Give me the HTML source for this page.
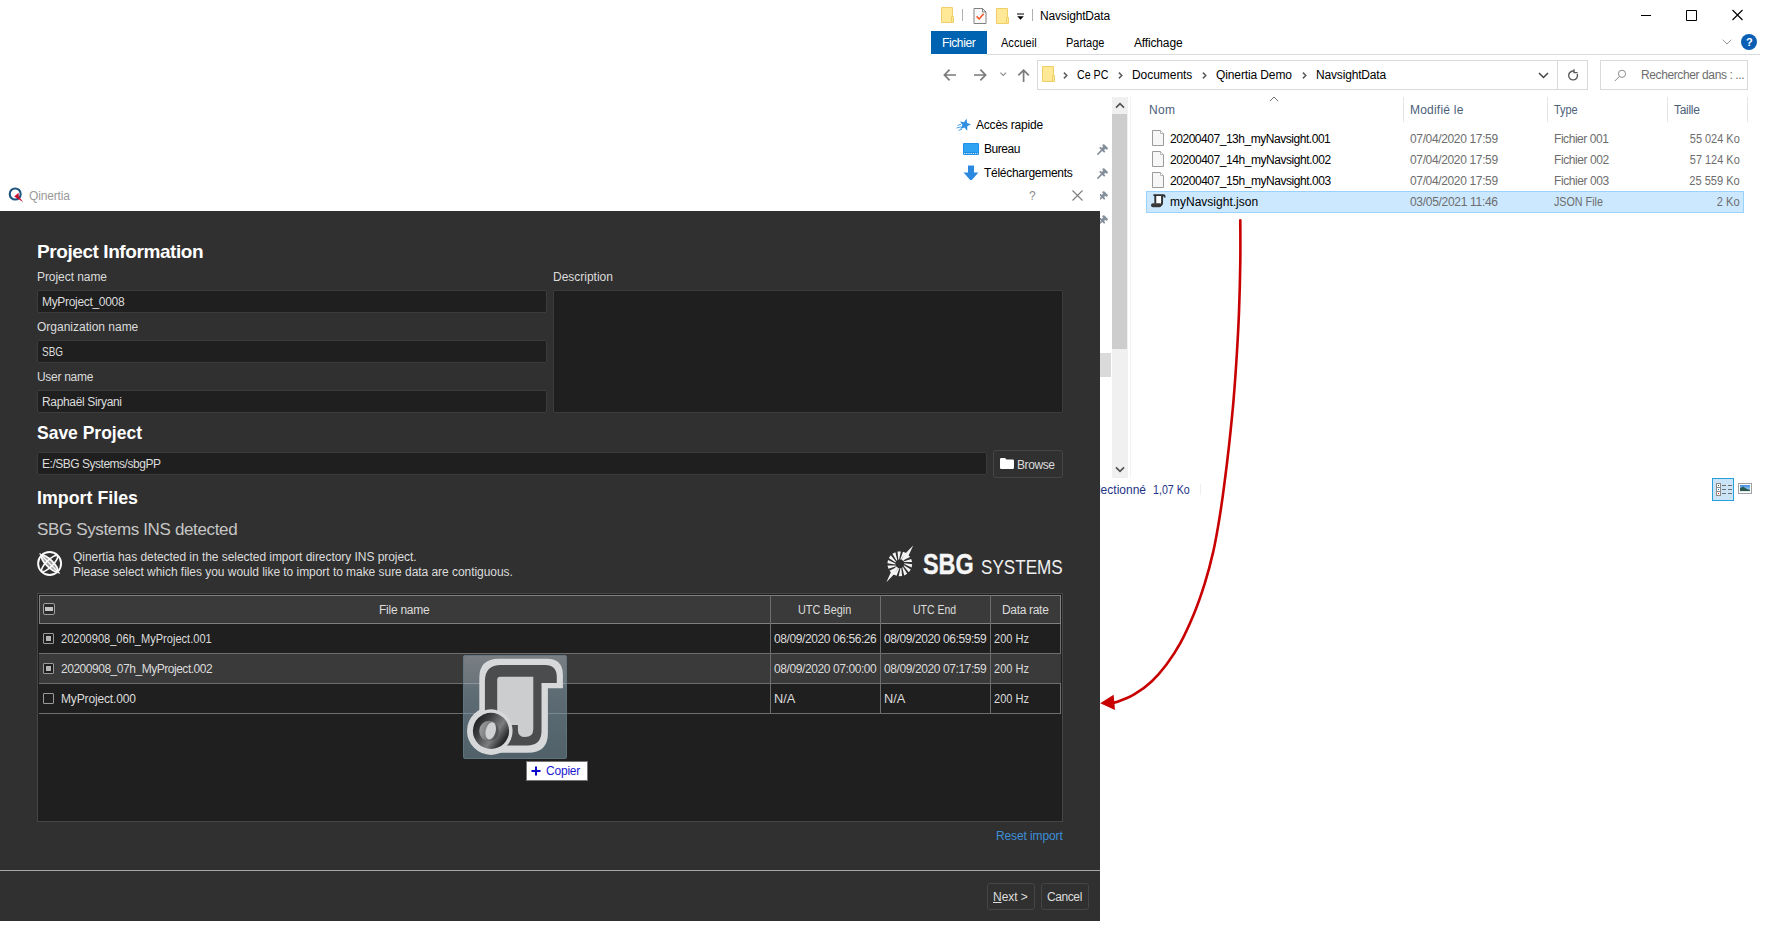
<!DOCTYPE html>
<html lang="fr">
<head>
<meta charset="utf-8">
<title>Qinertia - Import</title>
<style>
html,body{margin:0;padding:0;}
body{width:1781px;height:941px;position:relative;overflow:hidden;background:#fff;
  font-family:"Liberation Sans",sans-serif;font-size:12px;color:#000;}
.a{position:absolute;white-space:nowrap;}
.t{position:absolute;white-space:nowrap;line-height:16px;height:16px;transform-origin:0 50%;}
/* ---------- Explorer ---------- */
#ex .t{color:#000;font-size:12px;}
#ex .g{color:#6d6d6d;}
#ex .h{color:#4c607a;}
/* ---------- Dialog ---------- */
#dlg{position:absolute;left:0;top:211px;width:1100px;height:710px;background:#303030;}
#dlg .t{color:#dcdcdc;font-size:12px;}
#dlg .hd{font-weight:bold;font-size:19px;color:#fff;line-height:24px;height:24px;}
.inp{position:absolute;background:#1f1f1f;border:1px solid #3c3c3c;border-radius:2px;box-sizing:border-box;}
.btn{position:absolute;background:#303030;border:1px solid #454545;border-radius:3px;box-sizing:border-box;}
.cb{position:absolute;width:9px;height:9px;border:1px solid #9a9a9a;border-radius:1px;background:#1f1f1f;}
.cb.on::after{content:"";position:absolute;left:2px;top:2px;width:5px;height:5px;background:#b4b4b4;}
</style>
</head>
<body>

<!-- ================= EXPLORER WINDOW ================= -->
<div id="ex" class="a" style="left:0;top:0;width:1781px;height:941px;">
  <!-- title bar -->
  <svg class="a" style="left:941px;top:7px" width="13" height="16" viewBox="0 0 13 16"><path d="M0.5 0.5 H11.5 V15.5 H0.5 Z" fill="#ffe896" stroke="#f1cf68"/><path d="M10.5 9.5 H12.5 V15.5 H10.5 Z" fill="#ffe896" stroke="#f1cf68"/></svg>
  <div class="a" style="left:962px;top:9px;width:1px;height:12px;background:#b0b0b0;"></div>
  <svg class="a" style="left:973px;top:8px" width="14" height="16" viewBox="0 0 14 16"><path d="M1 0.5 H9.5 L13 4 V15.5 H1 Z" fill="#fafafa" stroke="#808080"/><path d="M9.5 0.5 V4 H13" fill="none" stroke="#808080"/><path d="M3.6 8.4 L6.2 11 L10.6 5.8" fill="none" stroke="#f0521e" stroke-width="1.5"/></svg>
  <svg class="a" style="left:996px;top:8px" width="13" height="16" viewBox="0 0 13 16"><path d="M0.5 0.5 H11.5 V15.5 H0.5 Z" fill="#ffe896" stroke="#f1cf68"/><path d="M10.5 9.5 H12.5 V15.5 H10.5 Z" fill="#ffe896" stroke="#f1cf68"/></svg>
  <svg class="a" style="left:1016px;top:13px" width="9" height="8" viewBox="0 0 9 8"><path d="M1 1 H8" stroke="#000" stroke-width="1"/><path d="M1.2 3.2 H7.8 L4.5 6.8 Z" fill="#000"/></svg>
  <div class="a" style="left:1032px;top:9px;width:1px;height:12px;background:#b0b0b0;"></div>
  <div class="t" style="left:1040px;top:8px;letter-spacing:-0.168px;">NavsightData</div>
  <svg class="a" style="left:1640px;top:9px" width="104" height="12" viewBox="0 0 104 12"><path d="M1 6.5 H11" stroke="#000" stroke-width="1"/><path d="M46.5 1.5 H56.5 V11.5 H46.5 Z" fill="none" stroke="#000" stroke-width="1"/><path d="M92.5 1 L102.5 11 M102.5 1 L92.5 11" stroke="#000" stroke-width="1.1" fill="none"/></svg>
  <!-- ribbon tabs -->
  <div class="a" style="left:931px;top:31px;width:56px;height:23px;background:#0063b1;"></div>
  <div class="a" style="left:987px;top:54px;width:773px;height:1px;background:#dadbdc;"></div>
  <div class="t" style="left:942px;top:35px;color:#fff;letter-spacing:-0.386px;">Fichier</div>
  <div class="t" style="left:1001px;top:35px;transform:scaleX(0.9202);">Accueil</div>
  <div class="t" style="left:1066px;top:35px;transform:scaleX(0.9136);">Partage</div>
  <div class="t" style="left:1134px;top:35px;letter-spacing:-0.154px;">Affichage</div>
  <svg class="a" style="left:1722px;top:39px" width="10" height="6" viewBox="0 0 10 6"><path d="M0.7 0.7 L5 5 L9.3 0.7" fill="none" stroke="#9a9a9a" stroke-width="1"/></svg>
  <div class="a" style="left:1741px;top:34px;width:16px;height:16px;border-radius:8px;background:#0a5fb4;"></div>
  <div class="t" style="left:1746px;top:34px;color:#fff;font-weight:bold;font-size:11px;">?</div>
  <!-- navigation bar -->
  <svg class="a" style="left:943px;top:68px" width="90" height="15" viewBox="0 0 90 15"><g fill="none" stroke="#7a7a7a" stroke-width="1.7"><path d="M13 7 H1.6 M6.6 1.6 L1.4 7 L6.6 12.4"/><path d="M31 7 H42.4 M37.4 1.6 L42.6 7 L37.4 12.4"/><path d="M75.4 7.4 L80.6 2.2 L85.8 7.4 M80.6 2.6 V14" /></g><path d="M57.4 4.6 L60.2 7.4 L63 4.6" fill="none" stroke="#8a8a8a" stroke-width="1.1"/></svg>
  <div class="a" style="left:1037px;top:60px;width:551px;height:30px;box-sizing:border-box;border:1px solid #d9d9d9;background:#fff;"></div>
  <svg class="a" style="left:1042px;top:66px" width="13" height="16" viewBox="0 0 13 16"><path d="M0.5 0.5 H11.5 V15.5 H0.5 Z" fill="#ffe896" stroke="#f1cf68"/><path d="M10.5 9.5 H12.5 V15.5 H10.5 Z" fill="#ffe896" stroke="#f1cf68"/></svg>
  <svg class="a" style="left:1063px;top:72px" width="5" height="7" viewBox="0 0 5 7"><path d="M0.9 0.6 L3.8 3.5 L0.9 6.4" fill="none" stroke="#5c5c5c" stroke-width="1.5"/></svg>
  <svg class="a" style="left:1118px;top:72px" width="5" height="7" viewBox="0 0 5 7"><path d="M0.9 0.6 L3.8 3.5 L0.9 6.4" fill="none" stroke="#5c5c5c" stroke-width="1.5"/></svg>
  <svg class="a" style="left:1202px;top:72px" width="5" height="7" viewBox="0 0 5 7"><path d="M0.9 0.6 L3.8 3.5 L0.9 6.4" fill="none" stroke="#5c5c5c" stroke-width="1.5"/></svg>
  <svg class="a" style="left:1302px;top:72px" width="5" height="7" viewBox="0 0 5 7"><path d="M0.9 0.6 L3.8 3.5 L0.9 6.4" fill="none" stroke="#5c5c5c" stroke-width="1.5"/></svg>
  <div class="t" style="left:1077px;top:67px;transform:scaleX(0.8884);">Ce PC</div>
  <div class="t" style="left:1132px;top:67px;letter-spacing:-0.050px;">Documents</div>
  <div class="t" style="left:1216px;top:67px;letter-spacing:-0.115px;">Qinertia Demo</div>
  <div class="t" style="left:1316px;top:67px;letter-spacing:-0.168px;">NavsightData</div>
  <svg class="a" style="left:1538px;top:72px" width="11" height="7" viewBox="0 0 11 7"><path d="M1 1 L5.5 5.5 L10 1" fill="none" stroke="#444" stroke-width="1.5"/></svg>
  <div class="a" style="left:1557px;top:61px;width:1px;height:28px;background:#d9d9d9;"></div>
  <svg class="a" style="left:1567px;top:69px" width="12" height="12" viewBox="0 0 12 12"><path d="M10.2 5 A4.4 4.4 0 1 1 7.4 2.3" fill="none" stroke="#5a5a5a" stroke-width="1.4"/><path d="M7 0.2 V3.6 H10.6" fill="none" stroke="#5a5a5a" stroke-width="1.3"/></svg>
  <div class="a" style="left:1600px;top:60px;width:148px;height:30px;box-sizing:border-box;border:1px solid #d9d9d9;background:#fff;"></div>
  <svg class="a" style="left:1614px;top:69px" width="13" height="13" viewBox="0 0 13 13"><circle cx="8" cy="4.8" r="3.6" fill="none" stroke="#8a8a8a" stroke-width="1"/><path d="M5.4 7.4 L0.8 12" stroke="#8a8a8a" stroke-width="1"/></svg>
  <div class="t g" style="left:1641px;top:67px;letter-spacing:-0.390px;">Rechercher dans : ...</div>
  <!-- navigation pane -->
  <svg class="a" style="left:956px;top:118px" width="15" height="14" viewBox="0 0 15 14"><g transform="rotate(14 9 7)"><path d="M9 0.6 L10.6 4.6 L14.6 4.9 L11.5 7.6 L12.6 12 L9 9.6 L5.4 12 L6.5 7.6 L3.4 4.9 L7.4 4.6 Z" fill="#2f8fe0"/></g><path d="M1.6 7.4 L5 6.4 M0.6 10 L5 8.8 M2.6 12.4 L6 11.2" stroke="#4aa0e6" stroke-width="1"/></svg>
  <div class="t" style="left:976px;top:117px;letter-spacing:-0.207px;">Accès rapide</div>
  <svg class="a" style="left:963px;top:143px" width="16" height="12" viewBox="0 0 16 12"><rect x="0" y="0" width="16" height="12" rx="1" fill="#1e90e6"/><rect x="1" y="1" width="14" height="8" fill="#2ea3f2"/><path d="M1 10.5 H15" stroke="#d6ecfb" stroke-width="1" stroke-dasharray="1.2 1"/></svg>
  <div class="t" style="left:984px;top:141px;letter-spacing:-0.461px;">Bureau</div>
  <svg class="a" style="left:963px;top:165px" width="16" height="17" viewBox="0 0 16 17"><path d="M5 0.5 H11 V7.5 H15.4 L8 16 L0.6 7.5 H5 Z" fill="#2b8ae0"/></svg>
  <div class="t" style="left:984px;top:165px;letter-spacing:-0.280px;">Téléchargements</div>
  <svg class="a" style="left:1097px;top:144px" width="11" height="11" viewBox="0 0 11 11"><g fill="none" stroke="#848f9a" stroke-linecap="round"><path d="M6.6 1.4 L9.6 4.4" stroke-width="2.4"/><path d="M7.4 3.6 L5.6 5.4" stroke-width="3"/><path d="M3.4 3.8 L7.2 7.6" stroke-width="1.9"/><path d="M4.6 6.4 L0.9 10.1" stroke-width="1.5"/></g></svg>
  <svg class="a" style="left:1097px;top:168px" width="11" height="11" viewBox="0 0 11 11"><g fill="none" stroke="#848f9a" stroke-linecap="round"><path d="M6.6 1.4 L9.6 4.4" stroke-width="2.4"/><path d="M7.4 3.6 L5.6 5.4" stroke-width="3"/><path d="M3.4 3.8 L7.2 7.6" stroke-width="1.9"/><path d="M4.6 6.4 L0.9 10.1" stroke-width="1.5"/></g></svg>
  <svg class="a" style="left:1097px;top:191px" width="11" height="11" viewBox="0 0 11 11"><g fill="none" stroke="#848f9a" stroke-linecap="round"><path d="M6.6 1.4 L9.6 4.4" stroke-width="2.4"/><path d="M7.4 3.6 L5.6 5.4" stroke-width="3"/><path d="M3.4 3.8 L7.2 7.6" stroke-width="1.9"/><path d="M4.6 6.4 L0.9 10.1" stroke-width="1.5"/></g></svg>
  <svg class="a" style="left:1097px;top:215px" width="11" height="11" viewBox="0 0 11 11"><g fill="none" stroke="#848f9a" stroke-linecap="round"><path d="M6.6 1.4 L9.6 4.4" stroke-width="2.4"/><path d="M7.4 3.6 L5.6 5.4" stroke-width="3"/><path d="M3.4 3.8 L7.2 7.6" stroke-width="1.9"/><path d="M4.6 6.4 L0.9 10.1" stroke-width="1.5"/></g></svg>
  <div class="a" style="left:1112px;top:97px;width:16px;height:381px;background:#f0f0f0;"></div>
  <div class="a" style="left:1112px;top:114px;width:15px;height:235px;background:#cdcdcd;"></div>
  <svg class="a" style="left:1115px;top:102px" width="10" height="7" viewBox="0 0 10 7"><path d="M1 5.6 L5 1.6 L9 5.6" fill="none" stroke="#505050" stroke-width="1.6"/></svg>
  <svg class="a" style="left:1115px;top:466px" width="10" height="7" viewBox="0 0 10 7"><path d="M1 1.4 L5 5.4 L9 1.4" fill="none" stroke="#505050" stroke-width="1.6"/></svg>
  <div class="a" style="left:1096px;top:353px;width:15px;height:24px;background:#dadada;"></div>
  <!-- file list -->
  <div class="a" style="left:1403px;top:97px;width:1px;height:25px;background:#e5e5e5;"></div>
  <div class="a" style="left:1547px;top:97px;width:1px;height:25px;background:#e5e5e5;"></div>
  <div class="a" style="left:1667px;top:97px;width:1px;height:25px;background:#e5e5e5;"></div>
  <div class="a" style="left:1747px;top:97px;width:1px;height:25px;background:#e5e5e5;"></div>
  <svg class="a" style="left:1269px;top:96px" width="10" height="6" viewBox="0 0 10 6"><path d="M0.8 5.2 L5 1 L9.2 5.2" fill="none" stroke="#707070" stroke-width="1"/></svg>
  <div class="t h" style="left:1149px;top:102px;letter-spacing:0.328px;">Nom</div>
  <div class="t h" style="left:1410px;top:102px;letter-spacing:0.216px;">Modifié le</div>
  <div class="t h" style="left:1554px;top:102px;transform:scaleX(0.9110);">Type</div>
  <div class="t h" style="left:1674px;top:102px;letter-spacing:-0.292px;">Taille</div>
  <div class="a" style="left:1146px;top:191px;width:598px;height:22px;box-sizing:border-box;border:1px solid #99d1ff;background:#cce8ff;"></div>
  <svg class="a" style="left:1152px;top:130px" width="12" height="16" viewBox="0 0 12 16"><path d="M0.5 0.5 H8.5 L11.5 3.5 V15.5 H0.5 Z" fill="#f7f7f7" stroke="#9b9b9b"/><path d="M8.5 0.5 V3.5 H11.5" fill="#fff" stroke="#b5b5b5"/></svg>
  <div class="t" style="left:1170px;top:131px;letter-spacing:-0.462px;">20200407_13h_myNavsight.001</div>
  <div class="t g" style="left:1410px;top:131px;letter-spacing:-0.355px;">07/04/2020 17:59</div>
  <div class="t g" style="left:1554px;top:131px;letter-spacing:-0.448px;">Fichier 001</div>
  <div class="t g" style="right:41px;top:131px;transform-origin:100% 50%;transform:scaleX(0.9119);">55 024 Ko</div>
  <svg class="a" style="left:1152px;top:151px" width="12" height="16" viewBox="0 0 12 16"><path d="M0.5 0.5 H8.5 L11.5 3.5 V15.5 H0.5 Z" fill="#f7f7f7" stroke="#9b9b9b"/><path d="M8.5 0.5 V3.5 H11.5" fill="#fff" stroke="#b5b5b5"/></svg>
  <div class="t" style="left:1170px;top:152px;letter-spacing:-0.447px;">20200407_14h_myNavsight.002</div>
  <div class="t g" style="left:1410px;top:152px;letter-spacing:-0.355px;">07/04/2020 17:59</div>
  <div class="t g" style="left:1554px;top:152px;letter-spacing:-0.408px;">Fichier 002</div>
  <div class="t g" style="right:41px;top:152px;transform-origin:100% 50%;transform:scaleX(0.9119);">57 124 Ko</div>
  <svg class="a" style="left:1152px;top:172px" width="12" height="16" viewBox="0 0 12 16"><path d="M0.5 0.5 H8.5 L11.5 3.5 V15.5 H0.5 Z" fill="#f7f7f7" stroke="#9b9b9b"/><path d="M8.5 0.5 V3.5 H11.5" fill="#fff" stroke="#b5b5b5"/></svg>
  <div class="t" style="left:1170px;top:173px;letter-spacing:-0.447px;">20200407_15h_myNavsight.003</div>
  <div class="t g" style="left:1410px;top:173px;letter-spacing:-0.355px;">07/04/2020 17:59</div>
  <div class="t g" style="left:1554px;top:173px;letter-spacing:-0.408px;">Fichier 003</div>
  <div class="t g" style="right:41px;top:173px;transform-origin:100% 50%;transform:scaleX(0.9211);">25 559 Ko</div>
  <svg class="a" style="left:1150px;top:193px" width="16" height="15" viewBox="0 0 16 15"><rect x="6" y="2.6" width="5.4" height="8" fill="#fff"/><g fill="none" stroke="#2e2e2e" stroke-width="1.9"><path d="M3.4 2.1 H13.4 Q14.6 2.1 14.6 3.4 V4.6"/><path d="M5.3 2.4 V10.4"/><path d="M12.1 2.4 V9.6 Q12.1 12.6 9 12.6"/></g><rect x="1" y="10.2" width="10.4" height="4" rx="2" fill="#383838"/></svg>
  <div class="t" style="left:1170px;top:194px;letter-spacing:0.005px;">myNavsight.json</div>
  <div class="t g" style="left:1410px;top:194px;letter-spacing:-0.302px;">03/05/2021 11:46</div>
  <div class="t g" style="left:1554px;top:194px;transform:scaleX(0.8942);">JSON File</div>
  <div class="t g" style="right:41px;top:194px;transform-origin:100% 50%;transform:scaleX(0.9276);">2 Ko</div>
  <!-- status bar -->
  <div class="t" style="right:635px;top:482px;color:#1e3287;transform-origin:100% 50%;letter-spacing:0.000px;">1 élément sélectionné</div>
  <div class="t" style="left:1153px;top:482px;color:#1e3287;transform:scaleX(0.8870);">1,07 Ko</div>
  <div class="a" style="left:1200px;top:484px;width:1px;height:11px;background:#efefef;"></div>
  <div class="a" style="left:1130px;top:97px;width:1px;height:381px;background:#f3f3f3;"></div>
  <div class="a" style="left:1712px;top:478px;width:22px;height:23px;box-sizing:border-box;border:1px solid #26a0da;background:#cce4f7;"></div>
  <svg class="a" style="left:1716px;top:483px" width="17" height="13" viewBox="0 0 17 13"><rect x="0.5" y="0.5" width="4" height="12" fill="#fff" stroke="#8a8a8a"/><path d="M0.5 4.5 H4.5 M0.5 8.5 H4.5" stroke="#8a8a8a"/><rect x="2" y="2" width="1" height="1" fill="#2a7a4a"/><rect x="2" y="6" width="1" height="1" fill="#3a7af0"/><rect x="2" y="10" width="1" height="1" fill="#e01010"/><path d="M6 2.5 H10 M12 2.5 H16 M6 6.5 H10 M12 6.5 H16 M6 10.5 H10 M12 10.5 H16" stroke="#6e6e6e"/></svg>
  <svg class="a" style="left:1738px;top:483px" width="14" height="11" viewBox="0 0 14 11"><defs><linearGradient id="sky" x1="0" y1="0" x2="0" y2="1"><stop offset="0" stop-color="#3a8ee8"/><stop offset="0.6" stop-color="#9cc6f0"/><stop offset="1" stop-color="#eef3f7"/></linearGradient></defs><rect x="0.5" y="0.5" width="13" height="10" fill="#fff" stroke="#a0a0a0"/><rect x="2" y="2" width="10" height="7" fill="url(#sky)"/><path d="M2 5.2 L5 3.6 L8 5.6 L12 7 V8 H2 Z" fill="#2a5a4a"/></svg>
</div>

<!-- ================= QINERTIA DIALOG ================= -->
<div id="dlgtitle" class="a" style="left:0;top:180px;width:1100px;height:31px;background:#fff;">
  <svg class="a" style="left:8px;top:7px" width="16" height="16" viewBox="0 0 16 16">
    <circle cx="7.2" cy="7" r="5.5" fill="none" stroke="#1d5480" stroke-width="2.1"/>
    <path d="M6.2 9.6 L10.6 5.8 L10.8 9.4 L15.2 15 L9.4 11.6 Z" fill="#c8102e"/>
  </svg>
  <div class="t" style="left:29px;top:8px;color:#9a9a9a;font-size:12px;letter-spacing:-0.147px;">Qinertia</div>
  <div class="t" style="left:1029px;top:8px;color:#8a8a8a;font-size:12px;">?</div>
  <svg class="a" style="left:1072px;top:10px" width="11" height="11" viewBox="0 0 11 11"><path d="M0.5 0.5 L10.5 10.5 M10.5 0.5 L0.5 10.5" stroke="#7c7c7c" stroke-width="1.1" fill="none"/></svg>
</div>
<div id="dlg">
  <div class="t hd" style="left:37px;top:29px;letter-spacing:-0.422px;">Project Information</div>
  <div class="t" style="left:37px;top:58px;letter-spacing:-0.064px;">Project name</div>
  <div class="inp" style="left:37px;top:79px;width:510px;height:23px;"></div>
  <div class="t" style="left:42px;top:83px;letter-spacing:-0.317px;">MyProject_0008</div>
  <div class="t" style="left:37px;top:108px;letter-spacing:-0.006px;">Organization name</div>
  <div class="inp" style="left:37px;top:129px;width:510px;height:23px;"></div>
  <div class="t" style="left:42px;top:133px;transform:scaleX(0.8286);">SBG</div>
  <div class="t" style="left:37px;top:158px;letter-spacing:-0.298px;">User name</div>
  <div class="inp" style="left:37px;top:179px;width:510px;height:23px;"></div>
  <div class="t" style="left:42px;top:183px;letter-spacing:-0.337px;">Raphaël Siryani</div>
  <div class="t" style="left:553px;top:58px;letter-spacing:-0.013px;">Description</div>
  <div class="inp" style="left:553px;top:79px;width:510px;height:123px;"></div>

  <div class="t hd" style="left:37px;top:210px;transform:scaleX(0.9204);">Save Project</div>
  <div class="inp" style="left:37px;top:241px;width:950px;height:23px;"></div>
  <div class="t" style="left:42px;top:245px;letter-spacing:-0.481px;">E:/SBG Systems/sbgPP</div>
  <div class="btn" style="left:993px;top:239px;width:70px;height:28px;"></div>
  <svg class="a" style="left:1000px;top:247px" width="14" height="11" viewBox="0 0 14 11"><path d="M0 1.2 Q0 0 1.2 0 L5 0 L6.5 1.6 L12.8 1.6 Q14 1.6 14 2.8 L14 9.8 Q14 11 12.8 11 L1.2 11 Q0 11 0 9.8 Z" fill="#ffffff"/></svg>
  <div class="t" style="left:1017px;top:246px;letter-spacing:-0.403px;">Browse</div>

  <div class="t hd" style="left:37px;top:275px;transform:scaleX(0.9379);">Import Files</div>
  <div class="t" style="left:37px;top:308px;font-size:17px;line-height:22px;height:22px;color:#c6c6c6;letter-spacing:-0.357px;">SBG Systems INS detected</div>

  <svg class="a" style="left:36px;top:339px" width="27" height="27" viewBox="0 0 27 27">
    <g fill="none" stroke="#fafafa">
      <circle cx="13.6" cy="13.5" r="11.5" stroke-width="1.9"/>
      <ellipse cx="13.6" cy="13.5" rx="11" ry="3.3" stroke-width="1.6" transform="rotate(-45 13.6 13.5)"/>
      <ellipse cx="13.6" cy="13.5" rx="11" ry="3.5" stroke-width="1.7" fill="#fafafa" fill-opacity="0.55" transform="rotate(45 13.6 13.5)"/>
      <path d="M3.6 3.5 L23.6 23.5" stroke-width="1.2"/>
    </g>
  </svg>
  <div class="t" style="left:73px;top:338px;letter-spacing:-0.048px;">Qinertia has detected in the selected import directory INS project.</div>
  <div class="t" style="left:73px;top:353px;letter-spacing:-0.044px;">Please select which files you would like to import to make sure data are contiguous.</div>
  <!-- SBG Systems logo -->
  <svg class="a" style="left:886px;top:334px" width="28" height="37" viewBox="0 0 28 37"><path d="M18.2 18.2 L26.2 19.3 L25.6 22.6 L18.2 19.1Z M18.0 20.2 L24.8 24.6 L22.8 27.3 L17.6 20.9Z M17.0 21.9 L21.2 28.8 L18.2 30.4 L16.3 22.4Z M15.3 22.9 L16.1 31.0 L12.7 31.2 L14.5 23.1Z M13.4 23.2 L10.6 30.8 L7.5 29.5 L12.6 23.0Z M11.5 22.6 L5.7 28.2 L3.5 25.7 L10.9 22.1Z M10.1 21.2 L2.4 23.7 L1.5 20.5 L9.7 20.5Z M9.4 19.4 L1.4 18.3 L2.0 15.0 L9.4 18.5Z M9.6 17.4 L2.8 13.0 L4.8 10.3 L10.0 16.7Z M10.6 15.7 L6.4 8.8 L9.4 7.2 L11.3 15.2Z M12.3 14.7 L11.5 6.6 L14.9 6.4 L13.1 14.5Z M14.2 14.4 L17.0 6.8 L20.1 8.1 L15.0 14.6Z M16.1 15.0 L21.9 9.4 L24.1 11.9 L16.7 15.5Z M17.5 16.4 L25.2 13.9 L26.1 17.1 L17.9 17.1Z M15.4 14.5 L20.3 7.5 L27.2 0.4 L22.6 10.6 L17.4 16.0Z M12.2 23.1 L7.3 30.1 L0.4 37.2 L5.0 27.0 L10.2 21.6Z" fill="#f4f4f4"/><circle cx="13.8" cy="18.8" r="3.4" fill="#303030"/></svg>
  <div class="t" style="left:923px;top:336px;font-size:30px;line-height:34px;height:34px;font-weight:bold;color:#f6f6f6;-webkit-text-stroke:0.4px #f6f6f6;transform:scaleX(0.7798);">SBG</div>
  <div class="t" style="left:981px;top:343.8px;font-size:19.8px;line-height:24px;height:24px;color:#f0f0f0;transform:scaleX(0.8643);">SYSTEMS</div>
  <!-- table -->
  <div class="a" style="left:37px;top:382px;width:1026px;height:229px;box-sizing:border-box;border:1px solid #464646;background:#1f1f1f;"></div>
  <div class="a" style="left:39px;top:384px;width:1022px;height:29px;box-sizing:border-box;border:1px solid #808080;background:#3a3a3a;"></div>
  <div class="a" style="left:770px;top:384px;width:1px;height:119px;background:#6e6e6e;"></div>
  <div class="a" style="left:880px;top:384px;width:1px;height:119px;background:#6e6e6e;"></div>
  <div class="a" style="left:990px;top:384px;width:1px;height:119px;background:#6e6e6e;"></div>
  <div class="a" style="left:1060px;top:413px;width:1px;height:90px;background:#6e6e6e;"></div>
  <div class="a" style="left:43px;top:392px;width:10px;height:10px;border:1px solid #a0a0a0;border-radius:2px;background:#2a2a2a;"><div class="a" style="left:1px;top:3px;width:8px;height:4px;background:#c4c4c4;"></div></div>
  <div class="t" style="left:379px;top:391px;letter-spacing:-0.248px;">File name</div>
  <div class="t" style="left:798px;top:391px;transform:scaleX(0.9065);">UTC Begin</div>
  <div class="t" style="left:913px;top:391px;transform:scaleX(0.8752);">UTC End</div>
  <div class="t" style="left:1002px;top:391px;letter-spacing:-0.320px;">Data rate</div>
  <div class="a" style="left:39px;top:442px;width:1022px;height:1px;background:#6e6e6e;"></div>
  <div class="cb on" style="left:43px;top:422px;"></div>
  <div class="t" style="left:61px;top:420px;transform:scaleX(0.9219);">20200908_06h_MyProject.001</div>
  <div class="t" style="left:774px;top:420px;letter-spacing:-0.406px;">08/09/2020 06:56:26</div>
  <div class="t" style="left:884px;top:420px;letter-spacing:-0.406px;">08/09/2020 06:59:59</div>
  <div class="t" style="left:994px;top:420px;transform:scaleX(0.9203);">200 Hz</div>
  <div class="a" style="left:39px;top:443px;width:1022px;height:29px;background:#3a3a3a;"></div>
  <div class="a" style="left:770px;top:443px;width:1px;height:29px;background:#6e6e6e;"></div>
  <div class="a" style="left:880px;top:443px;width:1px;height:29px;background:#6e6e6e;"></div>
  <div class="a" style="left:990px;top:443px;width:1px;height:29px;background:#6e6e6e;"></div>
  <div class="a" style="left:39px;top:472px;width:1022px;height:1px;background:#6e6e6e;"></div>
  <div class="cb on" style="left:43px;top:452px;"></div>
  <div class="t" style="left:61px;top:450px;letter-spacing:-0.471px;">20200908_07h_MyProject.002</div>
  <div class="t" style="left:774px;top:450px;letter-spacing:-0.406px;">08/09/2020 07:00:00</div>
  <div class="t" style="left:884px;top:450px;letter-spacing:-0.406px;">08/09/2020 07:17:59</div>
  <div class="t" style="left:994px;top:450px;transform:scaleX(0.9203);">200 Hz</div>
  <div class="a" style="left:39px;top:502px;width:1022px;height:1px;background:#6e6e6e;"></div>
  <div class="cb " style="left:43px;top:482px;"></div>
  <div class="t" style="left:61px;top:480px;letter-spacing:-0.142px;">MyProject.000</div>
  <div class="t" style="left:774px;top:480px;transform:scaleX(1.0692);">N/A</div>
  <div class="t" style="left:884px;top:480px;transform:scaleX(1.0692);">N/A</div>
  <div class="t" style="left:994px;top:480px;transform:scaleX(0.9203);">200 Hz</div>
  <div class="t" style="left:996px;top:617px;color:#3d8fd8;letter-spacing:-0.112px;">Reset import</div>
  <div class="a" style="left:0;top:659px;width:1100px;height:1px;background:#a8a8a8;"></div>
  <div class="btn" style="left:987px;top:672px;width:48px;height:27px;"></div>
  <div class="t" style="left:993px;top:678px;letter-spacing:-0.046px;"><span style="text-decoration:underline">N</span>ext &gt;</div>
  <div class="btn" style="left:1041px;top:672px;width:48px;height:27px;"></div>
  <div class="t" style="left:1047px;top:678px;letter-spacing:-0.412px;">Cancel</div>
</div>

<!-- ================= OVERLAYS ================= -->
<div id="ov" class="a" style="left:0;top:0;width:1781px;height:941px;pointer-events:none;">
  <svg class="a" style="left:463px;top:655px" width="104" height="104" viewBox="0 0 104 104">
    <defs>
      <linearGradient id="dg1" x1="0" y1="0" x2="0" y2="1"><stop offset="0" stop-color="#797f83"/><stop offset="0.26" stop-color="#6b757b"/><stop offset="0.32" stop-color="#5f6d75"/><stop offset="1" stop-color="#50616a"/></linearGradient>
      <linearGradient id="dg2" x1="0" y1="0" x2="0" y2="1"><stop offset="0" stop-color="#5f6d75"/><stop offset="1" stop-color="#50616a"/></linearGradient>
      <linearGradient id="curl" x1="0" y1="0.15" x2="1" y2="0.85"><stop offset="0" stop-color="#161718"/><stop offset="0.3" stop-color="#3c3e40"/><stop offset="0.62" stop-color="#7c7e80"/><stop offset="0.85" stop-color="#2c2d2e"/><stop offset="1" stop-color="#121314"/></linearGradient><linearGradient id="curl2" x1="0" y1="0" x2="1" y2="0.3"><stop offset="0" stop-color="#a2a4a6"/><stop offset="0.55" stop-color="#7a7c7e"/><stop offset="1" stop-color="#505254"/></linearGradient>
      <clipPath id="dclip"><rect x="0" y="0" width="104" height="104" rx="2.5"/></clipPath>
    </defs>
    <g clip-path="url(#dclip)">
      <rect x="0" y="0" width="104" height="104" fill="url(#dg1)"/>
      <rect x="0" y="28" width="104" height="1" fill="#8b9398"/>
      <rect x="0" y="58" width="104" height="1" fill="#788892"/>
    </g>
    <rect x="0.5" y="0.5" width="103" height="103" rx="2.5" fill="none" stroke="#5f7480" stroke-opacity="0.9"/>
    <path d="M36 3.8 H84 Q99.9 3.8 99.9 20 V33.2 H84.9 V78 Q84.9 97.8 65 97.8 H30 V56 H16.3 V23 Q16.3 3.8 36 3.8 Z" fill="#d6d8d9"/>
    <circle cx="28" cy="75.9" r="24" fill="#d6d8d9"/>
    <path d="M38 9.9 H82 Q93.8 9.9 93.8 22 V28 H78.5 V76 Q78.5 90.5 64 90.5 H40 V60 H21.9 V26 Q21.9 9.9 38 9.9 Z" fill="#4a4c4e"/>
    <path d="M37.2 21.8 H70.3 V74 Q70.3 82.1 62 82.1 Q54.9 82.1 54.9 75 V70 H34.2 V24.8 Q34.2 21.8 37.2 21.8 Z" fill="#cbcdce"/>
    <circle cx="28" cy="75.9" r="21.6" fill="#d6d8d9"/>
    <circle cx="28" cy="75.9" r="18.1" fill="url(#curl)"/>
    <ellipse cx="26" cy="76" rx="9.8" ry="10.2" fill="url(#curl2)"/>
    <ellipse cx="27.7" cy="75.9" rx="5" ry="8.8" transform="rotate(14 27.7 75.9)" fill="#cfd1d2"/>
  </svg>
  <div class="a" style="left:526px;top:761px;width:62px;height:20px;box-sizing:border-box;border:1px solid #767676;background:#fff;"></div>
  <svg class="a" style="left:531px;top:766px" width="10" height="10" viewBox="0 0 10 10"><path d="M5 0.5 V9.5 M0.5 5 H9.5" stroke="#0808c8" stroke-width="2"/></svg>
  <div class="t" style="left:546px;top:763px;color:#1a1ad2;font-size:12px;letter-spacing:-0.212px;">Copier</div>
  <svg class="a" style="left:1090px;top:210px" width="170" height="510" viewBox="1090 210 170 510">
    <path d="M1240.3 220.2 C1240.3 227.0 1240.5 245.7 1240.3 261.0 C1240.1 276.3 1239.6 296.8 1239.0 312.1 C1238.4 327.4 1237.8 338.2 1236.9 353.0 C1236.0 367.8 1234.8 385.3 1233.5 400.6 C1232.2 415.9 1230.7 430.1 1229.1 444.9 C1227.5 459.6 1225.4 476.4 1223.7 489.1 C1222.0 501.8 1220.8 510.5 1219.0 521.0 C1217.2 531.5 1215.6 541.4 1213.2 551.9 C1210.8 562.4 1207.9 573.4 1204.7 583.7 C1201.5 594.0 1198.2 603.6 1194.1 613.5 C1190.0 623.4 1184.9 634.7 1180.3 643.2 C1175.7 651.7 1171.3 658.1 1166.5 664.5 C1161.7 670.9 1156.9 676.5 1151.6 681.5 C1146.3 686.5 1140.3 690.8 1134.6 694.2 C1128.9 697.6 1122.0 700.2 1117.6 701.7 C1113.2 703.2 1109.6 702.8 1108.0 703.0" fill="none" stroke="#c80000" stroke-width="2.6" stroke-linecap="round"/>
    <path d="M1100.2 703.2 L1113.6 694.8 L1115 709.9 Z" fill="#c80000"/>
  </svg>
</div>

</body>
</html>
